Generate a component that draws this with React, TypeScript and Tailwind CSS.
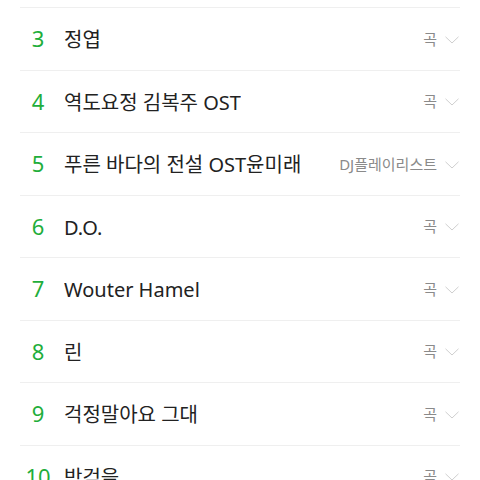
const rows = [
  { rank: 3, title: "정엽", type: "곡" },
  { rank: 4, title: "역도요정 김복주 OST", type: "곡" },
  { rank: 5, title: "푸른 바다의 전설 OST윤미래", type: "DJ플레이리스트" },
  { rank: 6, title: "D.O.", type: "곡" },
  { rank: 7, title: "Wouter Hamel", type: "곡" },
  { rank: 8, title: "린", type: "곡" },
  { rank: 9, title: "걱정말아요 그대", type: "곡" },
  { rank: 10, title: "박걱을", type: "곡" },
];

function Chevron() {
  return (
    <svg width="14" height="8" viewBox="0 0 14 8" className="ml-[8px] mr-[1px] mt-[2px]">
      <polyline points="0.5,0.8 7,7 13.5,0.8" fill="none" stroke="#cfcfcf" strokeWidth="1" />
    </svg>
  );
}

function KeywordRow({ rank, title, type }: { rank: number; title: string; type: string }) {
  return (
    <li className="flex h-[62.5px] items-center border-t border-[#efefef]">
      <div className="flex min-w-0 flex-1 items-baseline">
        <span className="w-9 shrink-0 text-center text-[22px] text-[#1fae3b]">{rank}</span>
        <span className="ml-2 truncate text-[20px] text-[#222]">{title}</span>
      </div>
      <span className="text-[15px] text-[#8a8a8a]">{type}</span>
      <Chevron />
    </li>
  );
}

export default function App() {
  return (
    <div className="h-[480px] w-[480px] overflow-hidden bg-white pt-[7px] font-['Noto_Sans','Noto_Sans_CJK_KR',sans-serif]">
      <ul className="mx-5">
        {rows.map((r) => (
          <KeywordRow key={r.rank} {...r} />
        ))}
      </ul>
    </div>
  );
}
